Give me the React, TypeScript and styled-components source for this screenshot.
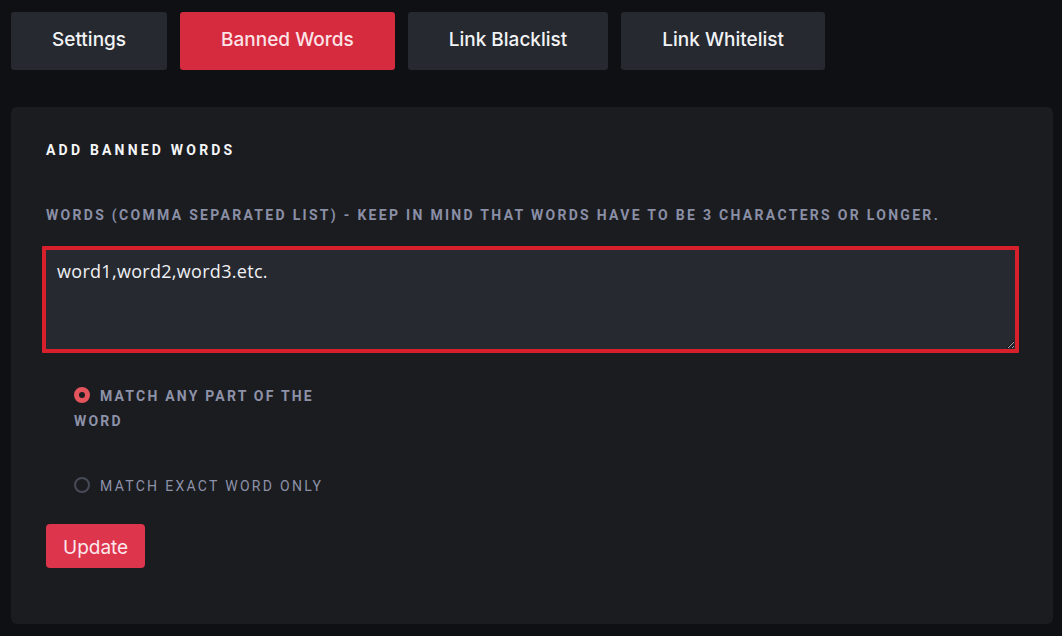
import React from "react";
import styled, { createGlobalStyle } from "styled-components";

const GlobalStyle = createGlobalStyle`
  html, body {
    margin: 0;
    padding: 0;
    background: #0f1014;
  }
  * {
    box-sizing: border-box;
  }
`;

const Page = styled.div`
  padding: 12px 9px 12px 11px;
  min-height: 636px;
  font-family: Inter, "Noto Sans", sans-serif;
`;

const Tabs = styled.nav`
  display: flex;
  gap: 13px;
`;

const Tab = styled.button<{ $active?: boolean }>`
  height: 58px;
  padding: 0 41px 4px;
  border: none;
  border-radius: 3px;
  background: ${(p) => (p.$active ? "#d62a3f" : "#262930")};
  color: ${(p) => (p.$active ? "#fbe3e6" : "#f2f3f5")};
  font-family: Inter, "Noto Sans", sans-serif;
  font-size: 19px;
  font-weight: 500;
  letter-spacing: 0;
  cursor: pointer;
`;

const Panel = styled.section`
  margin-top: 37px;
  background: #1b1c20;
  border-radius: 6px;
  padding: 34px 35px 56px 35px;
  display: flex;
  flex-direction: column;
  align-items: flex-start;
`;

const Heading = styled.h2`
  margin: 0;
  font-family: Roboto, "Liberation Sans", sans-serif;
  font-size: 14px;
  font-weight: 700;
  letter-spacing: 3.2px;
  color: #f4f5f7;
  line-height: 18px;
`;

const FieldLabel = styled.label`
  margin-top: 48px;
  font-family: Roboto, "Liberation Sans", sans-serif;
  font-size: 14px;
  font-weight: 700;
  letter-spacing: 2.3px;
  color: #8a8fa6;
  line-height: 16px;
  white-space: nowrap;
`;

const WordsInput = styled.textarea`
  margin: 23px 0 0 -4px;
  width: calc(100% + 5px);
  height: 107px;
  padding: 9px 11px;
  background: #262930;
  border: 4px solid #d8202d;
  border-radius: 1px;
  color: #f0f1f4;
  font-family: "Open Sans", "Noto Sans", sans-serif;
  font-size: 18px;
  letter-spacing: 0.3px;
  line-height: 24px;
  resize: vertical;
  outline: none;
`;

const RadioGroup = styled.div`
  margin-top: 31px;
  padding-left: 28px;
  display: flex;
  flex-direction: column;
  gap: 40px;
`;

const RadioRow = styled.label<{ $bold?: boolean }>`
  display: block;
  width: 270px;
  font-family: Roboto, "Liberation Sans", sans-serif;
  font-size: 14px;
  font-weight: ${(p) => (p.$bold ? 700 : 400)};
  letter-spacing: ${(p) => (p.$bold ? "2.2px" : "2.3px")};
  line-height: 25px;
  color: #8d92a9;
  cursor: pointer;
`;

const RadioDot = styled.span<{ $checked?: boolean }>`
  display: inline-block;
  vertical-align: -2px;
  width: 16px;
  height: 16px;
  margin-right: 10px;
  border-radius: 50%;
  background: ${(p) => (p.$checked ? "#1b1c20" : "transparent")};
  border: ${(p) => (p.$checked ? "5px solid #e4545c" : "2px solid #474b57")};
`;

const UpdateButton = styled.button`
  margin-top: 25px;
  height: 44px;
  padding: 0 17px 0;
  border: none;
  border-radius: 4px;
  background: #dc354c;
  color: #fde8ec;
  font-family: Inter, "Noto Sans", sans-serif;
  font-size: 19px;
  line-height: 47px;
  cursor: pointer;
`;

const tabs = ["Settings", "Banned Words", "Link Blacklist", "Link Whitelist"];

const App: React.FC = () => {
  const [match, setMatch] = React.useState<"any" | "exact">("any");

  return (
    <Page>
      <GlobalStyle />
      <Tabs>
        {tabs.map((t) => (
          <Tab key={t} $active={t === "Banned Words"}>
            {t}
          </Tab>
        ))}
      </Tabs>
      <Panel>
        <Heading>ADD BANNED WORDS</Heading>
        <FieldLabel htmlFor="words">
          WORDS (COMMA SEPARATED LIST) - KEEP IN MIND THAT WORDS HAVE TO BE 3 CHARACTERS OR LONGER.
        </FieldLabel>
        <WordsInput id="words" defaultValue="word1,word2,word3.etc." />
        <RadioGroup>
          <RadioRow $bold onClick={() => setMatch("any")}>
            <RadioDot $checked={match === "any"} />
            MATCH ANY PART OF THE WORD
          </RadioRow>
          <RadioRow onClick={() => setMatch("exact")}>
            <RadioDot $checked={match === "exact"} />
            MATCH EXACT WORD ONLY
          </RadioRow>
        </RadioGroup>
        <UpdateButton>Update</UpdateButton>
      </Panel>
    </Page>
  );
};

export default App;
